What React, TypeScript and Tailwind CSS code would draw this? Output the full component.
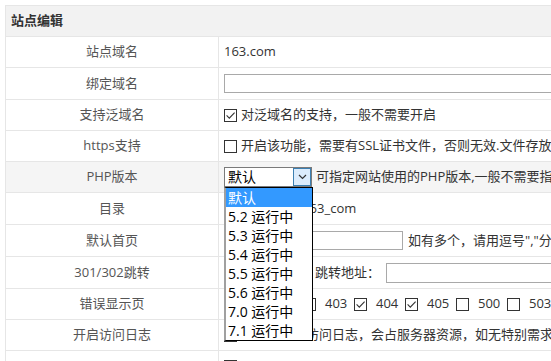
import React from 'react';

const Box = ({ checked = false }: { checked?: boolean }) => (
  <svg width="13" height="13" viewBox="0 0 13 13" className="shrink-0">
    <rect x="0.5" y="0.5" width="12" height="12" fill="#fff" stroke="#333" />
    {checked && <path d="M2.6 6.4 L5.3 9.1 L10.6 3.6" fill="none" stroke="#333" strokeWidth="1.1" />}
  </svg>
);

const Chevron = () => (
  <svg width="9" height="6" viewBox="0 0 9 6">
    <path d="M1 1 L4.5 4.5 L8 1" fill="none" stroke="#333" strokeWidth="1.2" />
  </svg>
);

const phpVersions = ['默认', '5.2 运行中', '5.3 运行中', '5.4 运行中', '5.5 运行中', '5.6 运行中', '7.0 运行中', '7.1 运行中'];

const errorPages = [
  { code: '403', checked: false },
  { code: '404', checked: true },
  { code: '405', checked: true },
  { code: '500', checked: false },
  { code: '503', checked: false },
];

// open dropdown of the php version select
const PhpSelect = () => (
  <div className="relative">
    <div className="flex h-[20px] w-[88px] border border-[#7a7a7a] bg-white">
      <span className="flex-1 pl-[3px] text-[14px] leading-[18px] text-black">默认</span>
      <span className="flex w-[18px] items-center justify-center border border-[#3c7fb1] bg-[#dcecfc]">
        <Chevron />
      </span>
    </div>
    <ul className="absolute left-0 top-full z-10 w-[89px] border border-black border-l-2 border-l-[#a0a0a0] bg-white">
      {phpVersions.map((v, i) => (
        <li
          key={v}
          className={
            i === 0
              ? 'h-[19px] pl-[2px] text-[14px] leading-[19px] bg-[#3399ff] text-white'
              : 'h-[19px] pl-[2px] text-[14px] leading-[19px] text-black'
          }
        >
          {v}
        </li>
      ))}
    </ul>
  </div>
);

const rows = [
  { label: '站点域名', h: 'h-[31px]', content: <span>163.com</span> },
  { label: '绑定域名', h: 'h-[32px]', content: <div className="h-[19px] w-[600px] border border-[#a9a9a9] bg-white" /> },
  {
    label: '支持泛域名',
    h: 'h-[31px]',
    content: (
      <div className="flex items-center gap-[4px]">
        <Box checked />
        <span>对泛域名的支持，一般不需要开启</span>
      </div>
    ),
  },
  {
    label: 'https支持',
    h: 'h-[31px]',
    content: (
      <div className="flex items-center gap-[4px] whitespace-nowrap">
        <Box />
        <span>开启该功能，需要有SSL证书文件，否则无效.文件存放在站点ssl目录下</span>
      </div>
    ),
  },
  {
    label: 'PHP版本',
    h: 'h-[31px]',
    hover: true,
    content: (
      <div className="flex items-center gap-[4px] whitespace-nowrap">
        <PhpSelect />
        <span>可指定网站使用的PHP版本,一般不需要指定</span>
      </div>
    ),
  },
  { label: '目录', h: 'h-[32px]', content: <span>D:/wwwroot/163_com</span> },
  {
    label: '默认首页',
    h: 'h-[32px]',
    content: (
      <div className="flex items-center gap-[5px] whitespace-nowrap">
        <div className="h-[19px] w-[179px] border border-[#a9a9a9] bg-white" />
        <span>如有多个，请用逗号","分隔</span>
      </div>
    ),
  },
  {
    label: '301/302跳转',
    h: 'h-[32px]',
    content: (
      <div className="flex items-center whitespace-nowrap">
        <div className="h-[20px] w-[86px] border border-[#7a7a7a] bg-white" />
        <span className="ml-[5px]">跳转地址：</span>
        <div className="ml-[6px] h-[20px] w-[300px] border border-[#a9a9a9] bg-white" />
      </div>
    ),
  },
  {
    label: '错误显示页',
    h: 'h-[31px]',
    content: (
      <div className="flex items-center gap-[7px] whitespace-nowrap">
        <div className="w-[72px]" />
        {errorPages.map((p) => (
          <div key={p.code} className="flex items-center gap-[9px]">
            <Box checked={p.checked} />
            <span className="w-[22px]">{p.code}</span>
          </div>
        ))}
      </div>
    ),
  },
  {
    label: '开启访问日志',
    h: 'h-[31px]',
    content: (
      <div className="flex items-center gap-[4px] whitespace-nowrap">
        <Box />
        <span>开启后记录访问日志，会占服务器资源，如无特别需求不建议开启</span>
      </div>
    ),
  },
  {
    label: '',
    h: 'h-[31px]',
    content: <Box />,
  },
];

export default function App() {
  return (
    <div className="h-[361px] w-[551px] overflow-hidden bg-white font-['Open_Sans','Noto_Sans_CJK_SC',sans-serif] text-[13px] text-[#333]">
      <div className="ml-[5px] mt-[5px] w-[900px] border-l border-t border-[#e6e6e6]">
        <div className="flex h-[31px] items-center border-b border-[#e6e6e6] bg-[#f2f2f2] pl-[5px] font-bold">
          站点编辑
        </div>
        {rows.map((row, i) => (
          <div
            key={i}
            className={`flex border-b border-[#e6e6e6] ${row.h} ${row.hover ? 'bg-[#f5f5f5]' : 'bg-white'}`}
          >
            <div className="flex w-[213px] shrink-0 items-center justify-center border-r border-[#e6e6e6] text-[#555]">
              {row.label}
            </div>
            <div className="flex flex-1 items-center pl-[5px]">{row.content}</div>
          </div>
        ))}
      </div>
    </div>
  );
}
